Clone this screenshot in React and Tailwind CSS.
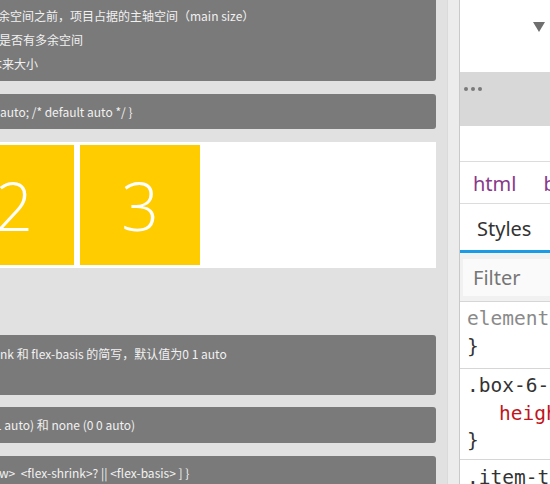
import React from 'react';

const cjk = { fontFamily: '"Noto Sans CJK SC", "Noto Sans", sans-serif' };
const ui = { fontFamily: '"Noto Sans", "Open Sans", sans-serif' };
const mono = { fontFamily: '"DejaVu Sans Mono", "Liberation Mono", monospace' };

function NoteLine({ children, shift = '' }) {
  return (
    <div className="h-[24px] leading-[24px] whitespace-nowrap">
      <span className={`inline-block ${shift}`}>{children}</span>
    </div>
  );
}

export default function App() {
  return (
    <div className="flex w-[550px] h-[484px] overflow-hidden bg-white">
      {/* page column */}
      <div className="w-[447px] shrink-0 bg-[#e1e1e1] overflow-hidden" style={cjk}>
        <div className="w-[436px] flex flex-col text-[12px] text-[#f1f1f1]">
          <div className="shrink-0 bg-[#7a7a7a] rounded-br-[3px] pt-[4px] pb-[5px]">
            <NoteLine shift="-ml-[2px]">余空间之前，项目占据的主轴空间（main size）</NoteLine>
            <NoteLine shift="-ml-[1px]">是否有多余空间</NoteLine>
            <NoteLine shift="-ml-[10px]">本来大小</NoteLine>
          </div>

          <div className="shrink-0 mt-[13px] h-[35px] flex items-center bg-[#7a7a7a] rounded-r-[3px] whitespace-nowrap">
            <span>auto; /* default auto */ {'}'}</span>
          </div>

          {/* flex demo */}
          <div className="shrink-0 mt-[13px] h-[126px] bg-white py-[3px] flex">
            <div className="flex -ml-[49px]" style={{ fontFamily: '"Open Sans", "Noto Sans", sans-serif' }}>
              {['2', '3'].map((n) => (
                <div
                  key={n}
                  className="w-[120px] h-[120px] mx-[3px] bg-[#ffcc00] flex items-center justify-center text-white text-[66px] font-light leading-none"
                >
                  {n}
                </div>
              ))}
            </div>
          </div>

          <div className="shrink-0 mt-[67px] h-[60px] pt-[7px] bg-[#7a7a7a] rounded-r-[3px]">
            <NoteLine>nk 和 flex-basis 的简写，默认值为0 1 auto</NoteLine>
          </div>

          <div className="shrink-0 mt-[12px] h-[36px] pt-[6px] bg-[#7a7a7a] rounded-r-[3px]">
            <NoteLine shift="-ml-[5px]">1 auto) 和 none (0 0 auto)</NoteLine>
          </div>

          <div className="shrink-0 mt-[13px] h-[40px] pt-[5px] bg-[#7a7a7a] rounded-tr-[3px]">
            <NoteLine shift="-ml-[1px]">w&gt;&nbsp; &lt;flex-shrink&gt;? || &lt;flex-basis&gt; ] {'}'}</NoteLine>
          </div>
        </div>
      </div>

      {/* scrollbar strip */}
      <div className="w-[13px] shrink-0 bg-[#ececec] border-l border-[#dadada] border-r border-r-[#c9c9c9]" />

      {/* devtools */}
      <div className="flex-1 flex flex-col bg-white text-[20px] overflow-hidden" style={ui}>
        <div className="shrink-0 h-[72px] flex justify-end pt-[22px] pr-[5px]">
          <div className="w-0 h-0 border-l-[6px] border-r-[6px] border-t-[10px] border-l-transparent border-r-transparent border-t-[#6f6f6f]" />
        </div>
        <div className="shrink-0 h-[54px] bg-[#d8d8d8] flex gap-[3px] pl-[4px] pt-[15px]">
          {[0, 1, 2].map((i) => (
            <span key={i} className="w-[4px] h-[4px] rounded-full bg-[#7a7a7a]" />
          ))}
        </div>
        <div className="shrink-0 h-[36px] border-b border-[#dcdcdc]" />
        <div className="shrink-0 h-[42px] pt-[2px] flex items-center gap-[27px] pl-[13px] text-[#88398a] whitespace-nowrap border-b border-[#dcdcdc]">
          <span>html</span>
          <span>body</span>
        </div>
        <div className="shrink-0 h-[49px] pt-[4px] flex items-center pl-[17px] text-[#333] border-b-[3px] border-[#1a9be6]">
          Styles
        </div>
        <div className="shrink-0 h-[49px] bg-[#f1f1f1] pl-[3px] pt-[6px] pb-[5px] border-b border-[#d6d6d6]">
          <div className="h-full bg-[#fafafa] flex items-center pl-[10px] text-[#767676]">Filter</div>
        </div>
        <div className="shrink-0 pl-[7px] pt-[3px] pb-[7px] text-[19.5px] leading-[28px] whitespace-nowrap border-b border-[#d6d6d6]" style={mono}>
          <div className="text-[#8a8a8a]">element.style {'{'}</div>
          <div className="text-[#333]">{'}'}</div>
        </div>
        <div className="shrink-0 pl-[7px] pt-[3px] pb-[4px] text-[19.5px] leading-[27.5px] whitespace-nowrap border-b border-[#d6d6d6]" style={mono}>
          <div className="text-[#333]">.box-6-item {'{'}</div>
          <div className="pl-[32px] text-[#c0161b]">height: 120px;</div>
          <div className="text-[#333]">{'}'}</div>
        </div>
        <div className="shrink-0 pl-[7px] pt-[4px] text-[19.5px] leading-[28px] whitespace-nowrap text-[#333]" style={mono}>
          .item-test {'{'}
        </div>
      </div>
    </div>
  );
}
